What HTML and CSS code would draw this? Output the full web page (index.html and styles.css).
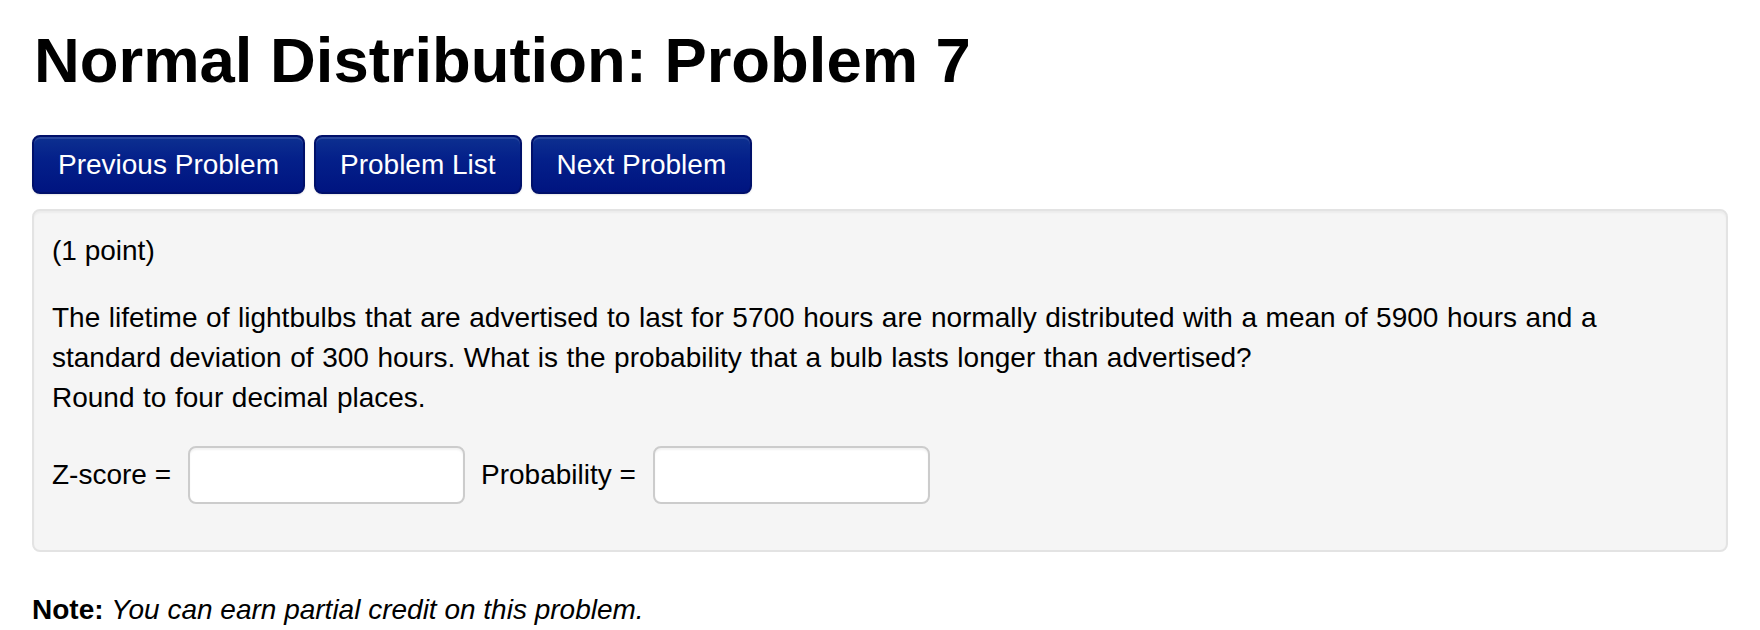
FILE: index.html
```html
<!DOCTYPE html>
<html lang="en">
<head>
<meta charset="utf-8">
<title>Normal Distribution: Problem 7</title>
<link rel="stylesheet" href="styles.css">
</head>
<body>
<main class="page">
  <h1 class="title">Normal Distribution: Problem 7</h1>
  <nav class="nav">
    <a class="btn" href="#">Previous Problem</a>
    <a class="btn" href="#">Problem List</a>
    <a class="btn" href="#">Next Problem</a>
  </nav>
  <section class="well">
    <div class="points">(1 point)</div>
    <p class="question">The lifetime of lightbulbs that are advertised to last for 5700 hours are normally distributed with a mean of 5900 hours and a standard deviation of 300 hours. What is the probability that a bulb lasts longer than advertised?<br>Round to four decimal places.</p>
    <div class="answers">
      <label class="label" for="z">Z-score =</label>
      <input class="field" id="z" type="text">
      <label class="label" for="p">Probability =</label>
      <input class="field" id="p" type="text">
    </div>
  </section>
  <p class="note"><b>Note:</b> <i>You can earn partial credit on this problem.</i></p>
</main>
</body>
</html>
```
FILE: styles.css
```css
html, body {
  margin: 0;
  padding: 0;
  background: #ffffff;
}
body {
  font-family: "Liberation Sans", Arial, Helvetica, sans-serif;
  font-size: 28px;
  line-height: 40px;
  color: #000;
}
.page {
  padding: 0 32px;
}
.title {
  margin: 25px 0 0 2px;
  font-size: 63.4px;
  line-height: 70px;
  font-weight: bold;
  color: #000;
}
.nav {
  display: flex;
  gap: 9px;
  margin-top: 40px;
}
.btn {
  display: flex;
  align-items: center;
  height: 59px;
  box-sizing: border-box;
  padding: 0 24px;
  border: 2px solid #00106a;
  border-radius: 8px;
  background: linear-gradient(to bottom, #0d3090 0%, #04208a 40%, #001480 100%);
  box-shadow: inset 0 2px 0 rgba(255,255,255,0.12), 0 1px 2px rgba(0,0,0,0.1);
  color: #fff;
  text-decoration: none;
  font-size: 28px;
  line-height: 40px;
}
.well {
  margin-top: 15px;
  padding: 20px 18px 46px;
  background: #f5f5f5;
  border: 2px solid #e3e3e3;
  border-radius: 8px;
  box-shadow: inset 0 2px 2px rgba(0,0,0,0.04);
}
.points {
  margin: 0;
}
.question {
  margin: 27px 0 0;
  max-width: 1580px;
  word-spacing: 0.8px;
}
.answers {
  display: flex;
  align-items: center;
  margin-top: 28px;
}
.label {
  margin-right: 17px;
}
.field {
  width: 277px;
  height: 58px;
  box-sizing: border-box;
  margin: 0 16px 0 0;
  padding: 8px 12px;
  border: 2px solid #cccccc;
  border-radius: 8px;
  background: #fff;
  box-shadow: inset 0 2px 2px rgba(0,0,0,0.05);
  font-family: inherit;
  font-size: 28px;
}
.note {
  margin: 38px 0 0;
}
```
